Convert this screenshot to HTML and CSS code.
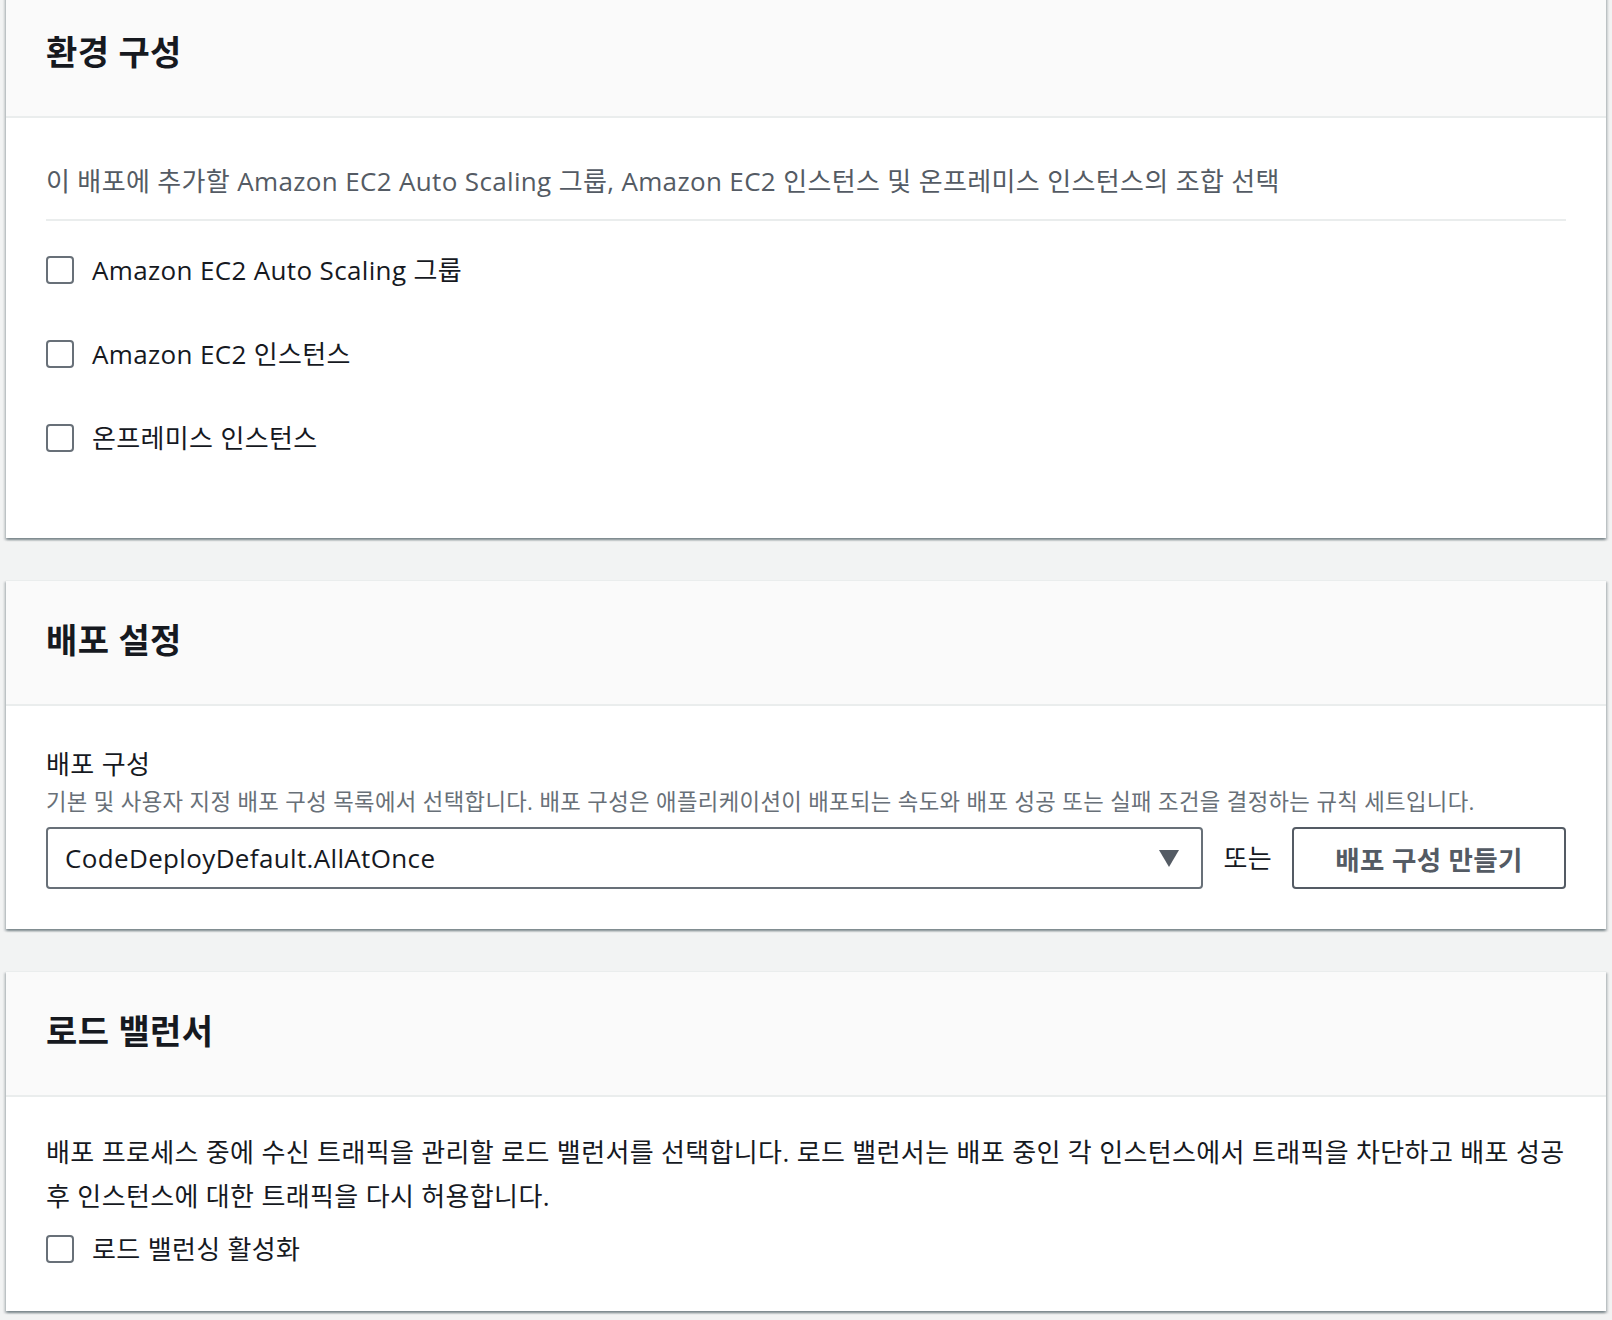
FILE: index.html
```html
<!DOCTYPE html>
<html lang="ko">
<head>
    <meta charset="UTF-8">
    <meta name="viewport" content="width=device-width, initial-scale=1.0">
    <title>배포 생성</title>
    <link rel="stylesheet" href="styles.css">
</head>
<body>
    <div class="page">
        <!-- 환경 구성 -->
        <section class="panel">
            <div class="panel-header">
                <h2>환경 구성</h2>
            </div>
            <div class="panel-body">
                <p class="hint">이 배포에 추가할 Amazon EC2 Auto Scaling 그룹, Amazon EC2 인스턴스 및 온프레미스 인스턴스의 조합 선택</p>
                <div class="check-list">
                    <label class="check"><span class="box"></span>Amazon EC2 Auto Scaling 그룹</label>
                    <label class="check"><span class="box"></span>Amazon EC2 인스턴스</label>
                    <label class="check"><span class="box"></span>온프레미스 인스턴스</label>
                </div>
            </div>
        </section>

        <!-- 배포 설정 -->
        <section class="panel">
            <div class="panel-header">
                <h2>배포 설정</h2>
            </div>
            <div class="panel-body">
                <div class="field-label">배포 구성</div>
                <div class="field-desc">기본 및 사용자 지정 배포 구성 목록에서 선택합니다. 배포 구성은 애플리케이션이 배포되는 속도와 배포 성공 또는 실패 조건을 결정하는 규칙 세트입니다.</div>
                <div class="field-row">
                    <div class="select">
                        <span>CodeDeployDefault.AllAtOnce</span>
                        <svg class="caret" width="20" height="17" viewBox="0 0 20 17"><path d="M0 0 H20 L10 17 Z" fill="#545b64"/></svg>
                    </div>
                    <span class="or">또는</span>
                    <button class="btn">배포 구성 만들기</button>
                </div>
            </div>
        </section>

        <!-- 로드 밸런서 -->
        <section class="panel">
            <div class="panel-header">
                <h2>로드 밸런서</h2>
            </div>
            <div class="panel-body">
                <p class="text">배포 프로세스 중에 수신 트래픽을 관리할 로드 밸런서를 선택합니다. 로드 밸런서는 배포 중인 각 인스턴스에서 트래픽을 차단하고 배포 성공 후 인스턴스에 대한 트래픽을 다시 허용합니다.</p>
                <label class="check check-single"><span class="box"></span>로드 밸런싱 활성화</label>
            </div>
        </section>
    </div>
</body>
</html>
```

FILE: styles.css
```css
body {
    margin: 0;
    background: #f2f3f3;
    font-family: "Open Sans", "Noto Sans CJK KR", sans-serif;
    font-size: 26px;
    letter-spacing: 0.35px;
    color: #16191f;
    word-break: keep-all;
}
.page {
    margin-top: -8px;
    padding: 0 6px;
}
.panel {
    background: #fff;
    border-top: 1px solid #eaeded;
    box-shadow: 0 2px 2px rgba(0, 28, 36, 0.3), 2px 2px 2px rgba(0, 28, 36, 0.15), -2px 2px 2px rgba(0, 28, 36, 0.15);
    margin-bottom: 42px;
}
.panel-header {
    background: #fafafa;
    border-bottom: 2px solid #eaeded;
    padding: 36px 40px 41px;
}
.panel-header h2 {
    margin: 0;
    font-size: 34px;
    line-height: 46px;
    font-weight: 700;
}
.panel-body {
    padding: 33px 40px 40px;
}
.hint {
    margin: 0;
    padding: 8px 0 16px;
    border-bottom: 2px solid #eaeded;
    color: #545b64;
    line-height: 44px;
}
.check-list {
    display: flex;
    flex-direction: column;
    gap: 40px;
    padding: 27px 0 38px;
}
.check {
    display: flex;
    align-items: center;
    gap: 18px;
    line-height: 44px;
}
.box {
    width: 24px;
    height: 24px;
    border: 2px solid #687078;
    border-radius: 4px;
    background: #fff;
    flex-shrink: 0;
}
.check-single {
    margin-top: 9px;
}
.field-label {
    margin-top: 3px;
    line-height: 44px;
}
.field-desc {
    font-size: 22.3px;
    line-height: 32px;
    color: #687078;
}
.field-row {
    display: flex;
    align-items: center;
    gap: 20px;
    margin-top: 9px;
}
.select {
    flex: 1;
    display: flex;
    align-items: center;
    justify-content: space-between;
    height: 58px;
    padding: 0 22px 0 17px;
    border: 2px solid #687078;
    border-radius: 4px;
}
.or {
    line-height: 44px;
}
.btn {
    width: 274px;
    height: 62px;
    background: #fff;
    border: 2px solid #545b64;
    border-radius: 4px;
    color: #545b64;
    font-family: inherit;
    font-size: 26.5px;
    letter-spacing: 0.35px;
    font-weight: 700;
    cursor: pointer;
}
.text {
    margin: 0;
    line-height: 44px;
}
```
